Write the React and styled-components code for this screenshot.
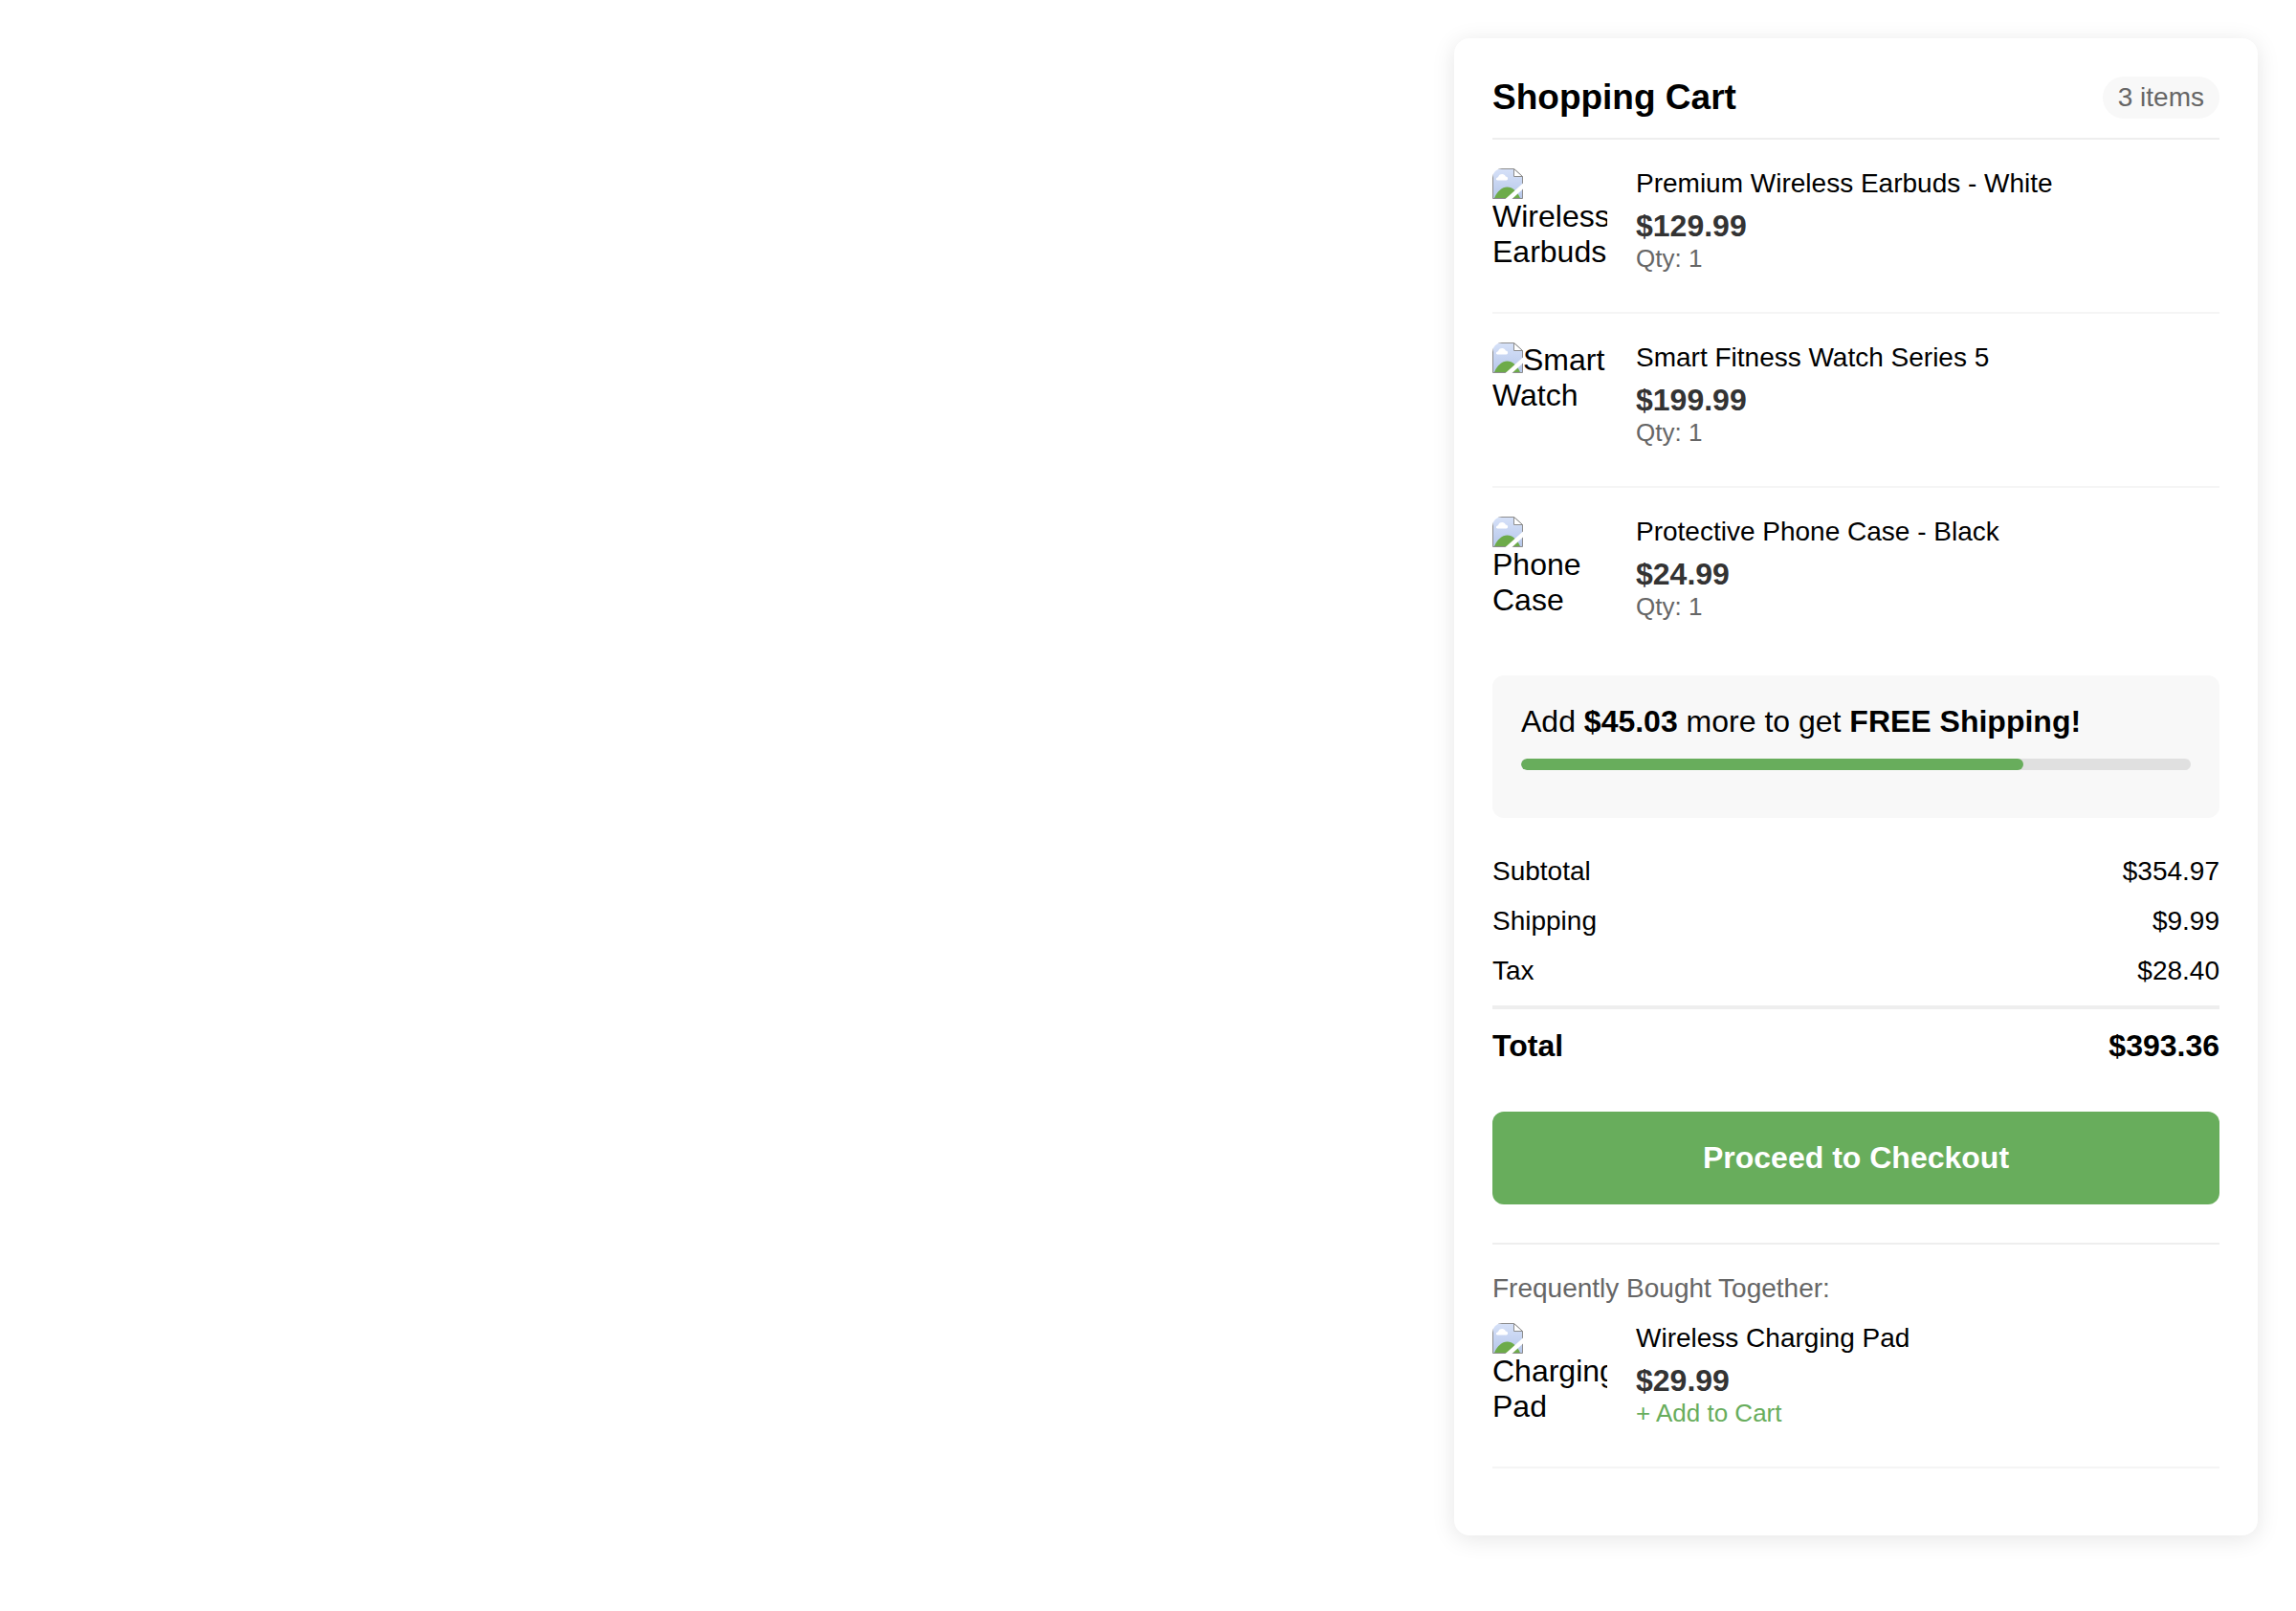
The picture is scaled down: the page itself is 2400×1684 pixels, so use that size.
import React from "react";
import styled, { createGlobalStyle } from "styled-components";

const GlobalStyle = createGlobalStyle`
  * {
    box-sizing: border-box;
  }
  body {
    margin: 0;
    background: #fff;
    color: #000;
    font-family: "Liberation Sans", Arial, Helvetica, sans-serif;
    font-size: 32px;
    line-height: 37px;
  }
  h2, h3, p, ul, dl, dd {
    margin: 0;
    padding: 0;
  }
`;

const Page = styled.main`
  display: flex;
  justify-content: flex-end;
  align-items: flex-start;
  padding: 40px;
`;

const Card = styled.section`
  width: 100%;
  max-width: 840px;
  padding: 40px;
  background: #fff;
  border-radius: 16px;
  box-shadow: 0 4px 24px rgba(0, 0, 0, 0.1);
`;

const Header = styled.header`
  display: flex;
  justify-content: space-between;
  align-items: center;
  padding-bottom: 20px;
  border-bottom: 2px solid #eee;
`;

const Title = styled.h2`
  font-size: 37px;
  line-height: 44px;
`;

const Count = styled.span`
  padding: 6px 16px;
  border-radius: 24px;
  background: #f8f8f8;
  color: #666;
  font-size: 28px;
  line-height: 32px;
`;

const Items = styled.ul`
  list-style: none;
`;

const Item = styled.li`
  display: flex;
  gap: 30px;
  padding: 30px 0;
  border-bottom: 2px solid #f5f5f5;

  ${Items} > &:last-child {
    border-bottom: none;
  }
`;

const SuggestedItem = styled(Item).attrs({ as: "div" })`
  padding-top: 0;
`;

const Thumb = styled.div`
  flex: none;
  width: 120px;
  height: 120px;
  overflow: hidden;
  border-radius: 10px;
`;

const ThumbIcon = styled.svg`
  float: left;
  width: 32px;
  height: 32px;
`;

const Details = styled.div`
  flex: 1;
  min-width: 0;
`;

const Name = styled.p`
  margin-bottom: 10px;
  font-size: 28px;
  line-height: 32px;
`;

const Price = styled.p`
  color: #333;
  font-weight: bold;
`;

const Quantity = styled.p`
  color: #666;
  font-size: 26px;
  line-height: 30px;
`;

const AddButton = styled.button`
  display: block;
  padding: 0;
  border: none;
  background: none;
  color: #68ad5c;
  font-family: inherit;
  font-size: 26px;
  line-height: 30px;
  cursor: pointer;
`;

const ShippingBox = styled.div`
  margin: 16px 0 40px;
  padding: 30px 30px 50px;
  border-radius: 12px;
  background: #f8f8f8;
`;

const Track = styled.div`
  height: 12px;
  margin-top: 20px;
  border-radius: 6px;
  background: #e0e0e0;
  overflow: hidden;
`;

const Fill = styled.div`
  width: ${({ $percent }) => $percent}%;
  height: 100%;
  border-radius: 6px;
  background: #68ad5c;
`;

const Summary = styled.dl`
  margin-bottom: 50px;
`;

const SummaryRow = styled.div`
  display: flex;
  justify-content: space-between;
  margin-bottom: 20px;
  font-size: 28px;
  line-height: 32px;
`;

const TotalRow = styled(SummaryRow)`
  margin-bottom: 0;
  padding-top: 20px;
  border-top: 4px solid #eee;
  font-size: 32px;
  line-height: 37px;
  font-weight: bold;
`;

const CheckoutButton = styled.button`
  display: block;
  width: 100%;
  padding: 30px;
  border: none;
  border-radius: 12px;
  background: #68ad5c;
  color: #fff;
  font-family: inherit;
  font-size: 32px;
  line-height: 37px;
  font-weight: bold;
  cursor: pointer;
`;

const Suggestions = styled.section`
  margin-top: 40px;
  padding: 30px 0;
  border-top: 2px solid #eee;
`;

const SuggestionsTitle = styled.h3`
  margin-bottom: 20px;
  color: #666;
  font-size: 28px;
  line-height: 32px;
  font-weight: normal;
`;

function Thumbnail({ label, id }) {
  return (
    <Thumb>
      <ThumbIcon viewBox="0 0 32 32" aria-hidden="true">
        <defs>
          <linearGradient id={id} x1="0" y1="0" x2="0" y2="1">
            <stop offset="0" stopColor="#d6e1f8" />
            <stop offset="1" stopColor="#b6c7ea" />
          </linearGradient>
        </defs>
        <path d="M0.5 0.5H22.5L31.5 8.5V31.5H0.5Z" fill={`url(#${id})`} />
        <path d="M2 31C5 24 10 19.5 15.5 19.5C21 19.5 26 24 29 31Z" fill="#6dab49" />
        <path d="M5.5 12.5C3.2 12.5 3.4 9.6 6 9.3C6.6 5.2 13 4.8 13.8 8.6C16.6 8.6 17 12.5 14.5 12.5Z" fill="#fff" />
        <path d="M0.5 0.5H22.5L31.5 8.5V31.5H0.5Z" fill="none" stroke="#8d8d8d" />
        <path d="M22.5 0.5V8.5H31.5Z" fill="#fff" stroke="#8d8d8d" />
        <path d="M13.5 32L32 15.5V21.5L20.5 32Z" fill="#fff" />
      </ThumbIcon>
      {label}
    </Thumb>
  );
}

const cartItems = [
  { id: "earbuds", label: "Wireless Earbuds", name: "Premium Wireless Earbuds - White", price: "$129.99" },
  { id: "watch", label: "Smart Watch", name: "Smart Fitness Watch Series 5", price: "$199.99" },
  { id: "case", label: "Phone Case", name: "Protective Phone Case - Black", price: "$24.99" },
];

const charges = [
  ["Subtotal", "$354.97"],
  ["Shipping", "$9.99"],
  ["Tax", "$28.40"],
];

export default function App() {
  return (
    <>
      <GlobalStyle />
      <Page>
        <Card>
          <Header>
            <Title>Shopping Cart</Title>
            <Count>3 items</Count>
          </Header>

          <Items>
            {cartItems.map((item) => (
              <Item key={item.id}>
                <Thumbnail label={item.label} id={item.id} />
                <Details>
                  <Name>{item.name}</Name>
                  <Price>{item.price}</Price>
                  <Quantity>Qty: 1</Quantity>
                </Details>
              </Item>
            ))}
          </Items>

          <ShippingBox>
            <p>
              Add <strong>$45.03</strong> more to get <strong>FREE Shipping!</strong>
            </p>
            <Track>
              <Fill $percent={75} />
            </Track>
          </ShippingBox>

          <Summary>
            {charges.map(([label, amount]) => (
              <SummaryRow key={label}>
                <dt>{label}</dt>
                <dd>{amount}</dd>
              </SummaryRow>
            ))}
            <TotalRow>
              <dt>Total</dt>
              <dd>$393.36</dd>
            </TotalRow>
          </Summary>

          <CheckoutButton type="button">Proceed to Checkout</CheckoutButton>

          <Suggestions>
            <SuggestionsTitle>Frequently Bought Together:</SuggestionsTitle>
            <SuggestedItem>
              <Thumbnail label="Charging Pad" id="pad" />
              <Details>
                <Name>Wireless Charging Pad</Name>
                <Price>$29.99</Price>
                <AddButton type="button">+ Add to Cart</AddButton>
              </Details>
            </SuggestedItem>
          </Suggestions>
        </Card>
      </Page>
    </>
  );
}
